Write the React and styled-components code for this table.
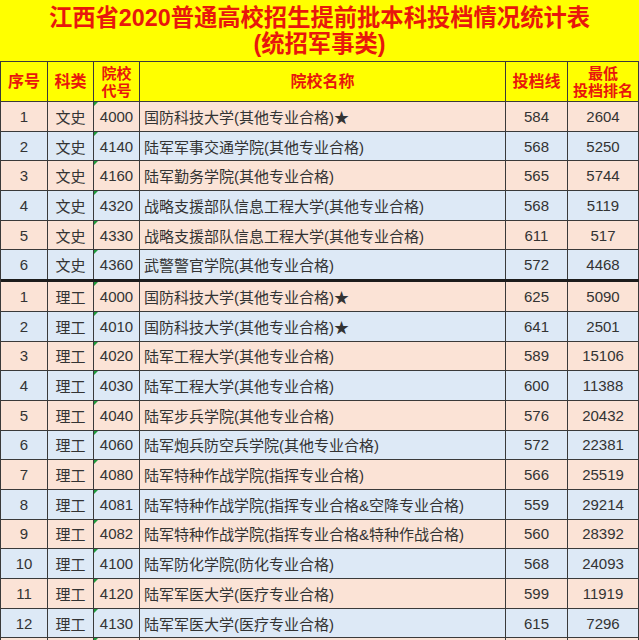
import React from 'react';
import styled, { createGlobalStyle } from 'styled-components';

const GlobalStyle = createGlobalStyle`
  html, body {
    margin: 0;
    padding: 0;
    background: #ffffff;
  }
  body {
    font-family: "Liberation Sans", "Noto Sans CJK SC", sans-serif;
    overflow: hidden;
  }
`;

const cols = '47px 46px 46px 366px 62px 1fr';

const Sheet = styled.div`
  width: 639px;
  height: 640px;
  overflow: hidden;
  background: #ffffff;
`;

const Title = styled.div`
  height: 61px;
  background: #ffff00;
  display: flex;
  flex-direction: column;
  align-items: center;
  justify-content: center;
  color: #e8170c;
  font-weight: bold;
  font-size: 23.3px;
  line-height: 26px;
  padding-top: 1px;
  box-sizing: border-box;
`;

const Grid = styled.div`
  border-left: 1px solid #3a3a3a;
`;

const HeadRow = styled.div`
  display: grid;
  grid-template-columns: ${cols};
  height: 41px;
  background: #ffff00;
  border-top: 1px solid #3a3a3a;
  border-bottom: 1px solid #3a3a3a;
  box-sizing: border-box;
`;

const HeadCell = styled.div`
  display: flex;
  align-items: center;
  justify-content: center;
  text-align: center;
  color: #e8170c;
  font-weight: bold;
  font-size: ${({ small }) => (small ? '15px' : '16px')};
  line-height: 17px;
  border-right: 1px solid #3a3a3a;
  white-space: pre-line;
`;

const Row = styled.div`
  display: grid;
  grid-template-columns: ${cols};
  height: ${({ thick }) => (thick ? '31.7px' : '29.7px')};
  background: ${({ odd }) => (odd ? '#fbe3d6' : '#dde9f6')};
  border-bottom: ${({ thick }) => (thick ? '3px solid #1c1c1c' : '1px solid #3a3a3a')};
  box-sizing: border-box;
`;

const Cell = styled.div`
  position: relative;
  display: flex;
  align-items: center;
  justify-content: ${({ left }) => (left ? 'flex-start' : 'center')};
  padding-left: ${({ left }) => (left ? '4px' : '0')};
  font-size: 15px;
  color: #333333;
  border-right: 1px solid #3a3a3a;
  white-space: nowrap;
  overflow: hidden;
`;

const Flag = styled.span`
  position: absolute;
  left: 0;
  top: 0;
  width: 0;
  height: 0;
  border-top: 4px solid #1e9a3a;
  border-right: 4px solid transparent;
`;

const header = [
  { t: '序号' },
  { t: '科类' },
  { t: '院校\n代号', small: true },
  { t: '院校名称' },
  { t: '投档线' },
  { t: '最低\n投档排名', small: true },
];

const rows = [
  ['1', '文史', '4000', '国防科技大学(其他专业合格)★', '584', '2604'],
  ['2', '文史', '4140', '陆军军事交通学院(其他专业合格)', '568', '5250'],
  ['3', '文史', '4160', '陆军勤务学院(其他专业合格)', '565', '5744'],
  ['4', '文史', '4320', '战略支援部队信息工程大学(其他专业合格)', '568', '5119'],
  ['5', '文史', '4330', '战略支援部队信息工程大学(其他专业合格)', '611', '517'],
  ['6', '文史', '4360', '武警警官学院(其他专业合格)', '572', '4468'],
  ['1', '理工', '4000', '国防科技大学(其他专业合格)★', '625', '5090'],
  ['2', '理工', '4010', '国防科技大学(其他专业合格)★', '641', '2501'],
  ['3', '理工', '4020', '陆军工程大学(其他专业合格)', '589', '15106'],
  ['4', '理工', '4030', '陆军工程大学(其他专业合格)', '600', '11388'],
  ['5', '理工', '4040', '陆军步兵学院(其他专业合格)', '576', '20432'],
  ['6', '理工', '4060', '陆军炮兵防空兵学院(其他专业合格)', '572', '22381'],
  ['7', '理工', '4080', '陆军特种作战学院(指挥专业合格)', '566', '25519'],
  ['8', '理工', '4081', '陆军特种作战学院(指挥专业合格&空降专业合格)', '559', '29214'],
  ['9', '理工', '4082', '陆军特种作战学院(指挥专业合格&特种作战合格)', '560', '28392'],
  ['10', '理工', '4100', '陆军防化学院(防化专业合格)', '568', '24093'],
  ['11', '理工', '4120', '陆军军医大学(医疗专业合格)', '599', '11919'],
  ['12', '理工', '4130', '陆军军医大学(医疗专业合格)', '615', '7296'],
  ['', '', '', '', '', ''],
];

export default function App() {
  return (
    <Sheet>
      <GlobalStyle />
      <Title>
        <div>江西省2020普通高校招生提前批本科投档情况统计表</div>
        <div>(统招军事类)</div>
      </Title>
      <Grid>
        <HeadRow>
          {header.map((h, i) => (
            <HeadCell key={i} small={h.small}>{h.t}</HeadCell>
          ))}
        </HeadRow>
        {rows.map((r, i) => (
          <Row key={i} odd={i % 2 === 0} thick={i === 5}>
            <Cell>{r[0]}</Cell>
            <Cell>{r[1]}</Cell>
            <Cell>
              <Flag />
              {r[2]}
            </Cell>
            <Cell left>{r[3]}</Cell>
            <Cell>{r[4]}</Cell>
            <Cell>{r[5]}</Cell>
          </Row>
        ))}
      </Grid>
    </Sheet>
  );
}
